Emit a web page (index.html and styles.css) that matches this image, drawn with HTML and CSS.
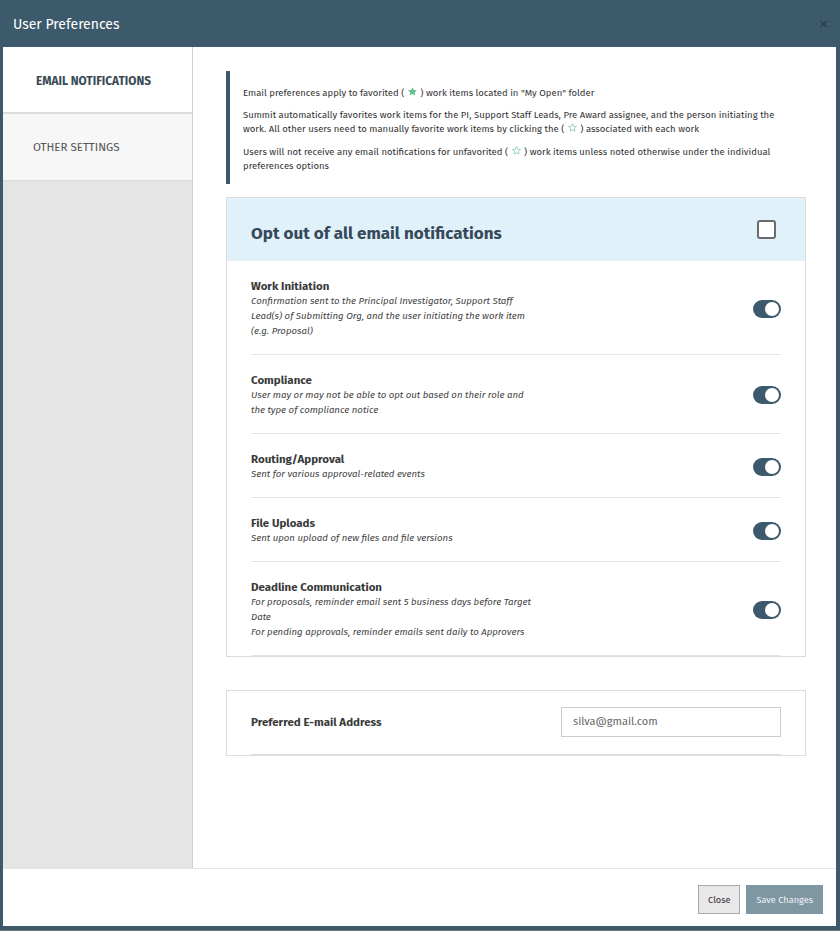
FILE: index.html
```html
<!DOCTYPE html>
<html lang="en">
<head>
<meta charset="utf-8">
<title>User Preferences</title>
<link rel="stylesheet" href="styles.css">
</head>
<body>
<div class="modal">
  <header class="modal-header">
    <h1 class="modal-title">User Preferences</h1>
    <span class="modal-close">&#x2715;</span>
  </header>
  <div class="modal-body">
    <div class="main">
      <nav class="sidebar">
        <div class="tab tab-active">EMAIL NOTIFICATIONS</div>
        <div class="tab">OTHER SETTINGS</div>
      </nav>
      <section class="content">
        <div class="info">
          <p>Email preferences apply to favorited ( <svg class="star" viewBox="0 0 24 24"><path class="star-fill" d="M12 2.5l2.9 6.2 6.8.7-5.1 4.6 1.5 6.7L12 17.3l-6.1 3.4 1.5-6.7-5.1-4.6 6.8-.7z"/></svg> ) work items located in "My Open" folder</p>
          <p>Summit automatically favorites work items for the PI, Support Staff Leads, Pre Award assignee, and the person initiating the work. All other users need to manually favorite work items by clicking the ( <svg class="star" viewBox="0 0 24 24"><path class="star-line" d="M12 3.5l2.6 5.6 6.1.7-4.6 4.1 1.3 6L12 16.8l-5.4 3.1 1.3-6-4.6-4.1 6.1-.7z"/></svg> ) associated with each work</p>
          <p>Users will not receive any email notifications for unfavorited ( <svg class="star" viewBox="0 0 24 24"><path class="star-line" d="M12 3.5l2.6 5.6 6.1.7-4.6 4.1 1.3 6L12 16.8l-5.4 3.1 1.3-6-4.6-4.1 6.1-.7z"/></svg> ) work items unless noted otherwise under the individual preferences options</p>
        </div>

        <div class="card">
          <div class="card-head">
            <h2 class="card-title">Opt out of all email notifications</h2>
            <span class="checkbox"></span>
          </div>
          <div class="row">
            <div class="row-text">
              <div class="row-title">Work Initiation</div>
              <div class="row-desc">Confirmation sent to the Principal Investigator, Support Staff Lead(s) of Submitting Org, and the user initiating the work item (e.g. Proposal)</div>
            </div>
            <span class="toggle"><span class="knob"></span></span>
          </div>
          <div class="row">
            <div class="row-text">
              <div class="row-title">Compliance</div>
              <div class="row-desc">User may or may not be able to opt out based on their role and the type of compliance notice</div>
            </div>
            <span class="toggle"><span class="knob"></span></span>
          </div>
          <div class="row">
            <div class="row-text">
              <div class="row-title">Routing/Approval</div>
              <div class="row-desc">Sent for various approval-related events</div>
            </div>
            <span class="toggle"><span class="knob"></span></span>
          </div>
          <div class="row">
            <div class="row-text">
              <div class="row-title">File Uploads</div>
              <div class="row-desc">Sent upon upload of new files and file versions</div>
            </div>
            <span class="toggle"><span class="knob"></span></span>
          </div>
          <div class="row">
            <div class="row-text">
              <div class="row-title">Deadline Communication</div>
              <div class="row-desc">For proposals, reminder email sent 5 business days before Target Date<br>For pending approvals, reminder emails sent daily to Approvers</div>
            </div>
            <span class="toggle"><span class="knob"></span></span>
          </div>
        </div>

        <div class="card email-card">
          <div class="email-row">
            <div class="row-title">Preferred E-mail Address</div>
            <div class="input">silva@gmail.com</div>
          </div>
        </div>
      </section>
    </div>
    <footer class="footer">
      <button class="btn btn-close">Close</button>
      <button class="btn btn-save">Save Changes</button>
    </footer>
  </div>
</div>
</body>
</html>
```

FILE: styles.css
```css
* { box-sizing: border-box; }
html, body { margin: 0; padding: 0; }
body {
  font-family: "Fira Sans", Roboto, "Liberation Sans", sans-serif;
  color: #333;
  background: #fff;
}
.modal {
  width: 840px;
  height: 931px;
  background: #3d5a6c;
  display: flex;
  flex-direction: column;
  padding: 0 4px 4px 3px;
  border-bottom: 1px solid #777;
}
.modal-header {
  height: 47px;
  display: flex;
  align-items: center;
  justify-content: space-between;
  padding: 2px 8px 0 10px;
}
.modal-title {
  margin: 0;
  font-size: 14px;
  font-weight: 400;
  color: #fff;
}
.modal-close {
  color: #2b3f4b;
  font-size: 11px;
  font-weight: 700;
}
.modal-body {
  flex: 1;
  background: #fff;
  display: flex;
  flex-direction: column;
}
.main {
  height: 821px;
  display: flex;
}
.sidebar {
  width: 190px;
  background: #e5e5e5;
  border-right: 1px solid #cfcfcf;
}
.tab {
  height: 67px;
  display: flex;
  align-items: center;
  padding-left: 30px;
  font-size: 11.5px;
  color: #555;
  background: #f7f7f7;
  border-bottom: 1px solid #dcdcdc;
}
.tab-active {
  height: 67px;
  background: #fff;
  font-weight: 700;
  font-size: 11.8px;
  color: #3a4b57;
  padding-left: 33px;
  padding-top: 2px;
  border-bottom: 2px solid #dcdcdc;
}
.content {
  flex: 1;
  padding: 24px 30px 0 33px;
}
.info {
  border-left: 4px solid #3d5a6c;
  padding: 8px 0 8px 13px;
  font-size: 9.5px;
  line-height: 14px;
  color: #333;
}
.info p { margin: 7px 0 8px; max-width: 545px; }
.info p:last-child { margin-top: 9px; margin-bottom: 3px; }
.star {
  width: 11px;
  height: 11px;
  vertical-align: -1px;
}
.star-fill { fill: #62c194; }
.star-line { fill: none; stroke: #7fcfa8; stroke-width: 1.8; stroke-linejoin: round; }
.card {
  margin-top: 13px;
  border: 1px solid #dcdcdc;
}
.card-head {
  height: 63px;
  background: #e1f1fa;
  display: flex;
  align-items: center;
  justify-content: space-between;
  padding: 0 29px 0 24px;
  border-bottom: 1px solid #e6eef2;
}
.card-title {
  margin: 0;
  font-size: 17px;
  font-weight: 700;
  color: #35495a;
  padding-top: 8px;
}
.checkbox {
  width: 19px;
  height: 19px;
  border: 2px solid #6b6b6b;
  border-radius: 3px;
  background: #fff;
}
.row {
  margin: 0 24px;
  padding: 17px 0 15px;
  border-bottom: 1px solid #e5e5e5;
  display: flex;
  align-items: center;
  justify-content: space-between;
}
.row-title {
  font-size: 11.5px;
  font-weight: 700;
  line-height: 16px;
  color: #3a3a3a;
}
.row-desc {
  font-size: 9.65px;
  font-style: italic;
  line-height: 15px;
  color: #444;
  max-width: 284px;
}
.toggle {
  width: 28px;
  height: 18px;
  border-radius: 9px;
  background: #3d5a6c;
  display: flex;
  align-items: center;
  justify-content: flex-end;
  padding-right: 2px;
  flex-shrink: 0;
}
.knob {
  width: 14px;
  height: 14px;
  border-radius: 50%;
  background: #fff;
}
.email-card { margin-top: 33px; }
.email-row {
  margin: 0 24px;
  padding: 16px 0 17px;
  border-bottom: 1px solid #dcdcdc;
  display: flex;
  align-items: center;
  justify-content: space-between;
}
.input {
  width: 220px;
  height: 30px;
  border: 1px solid #cccccc;
  padding: 0 11px;
  font-size: 11px;
  line-height: 28px;
  color: #666;
}
.footer {
  flex: 1;
  border-top: 1px solid #e5e5e5;
  display: flex;
  justify-content: flex-end;
  gap: 6px;
  padding: 16px 13px 0 0;
}
.btn {
  height: 29px;
  font-family: inherit;
  font-size: 9.2px;
  padding: 0 9px;
  cursor: pointer;
}
.btn-close {
  background: #e8e8e8;
  border: 1px solid #a9a9a9;
  color: #333;
}
.btn-save {
  background: #7f96a3;
  border: 1px solid #7f96a3;
  color: #eef2f4;
}
```
